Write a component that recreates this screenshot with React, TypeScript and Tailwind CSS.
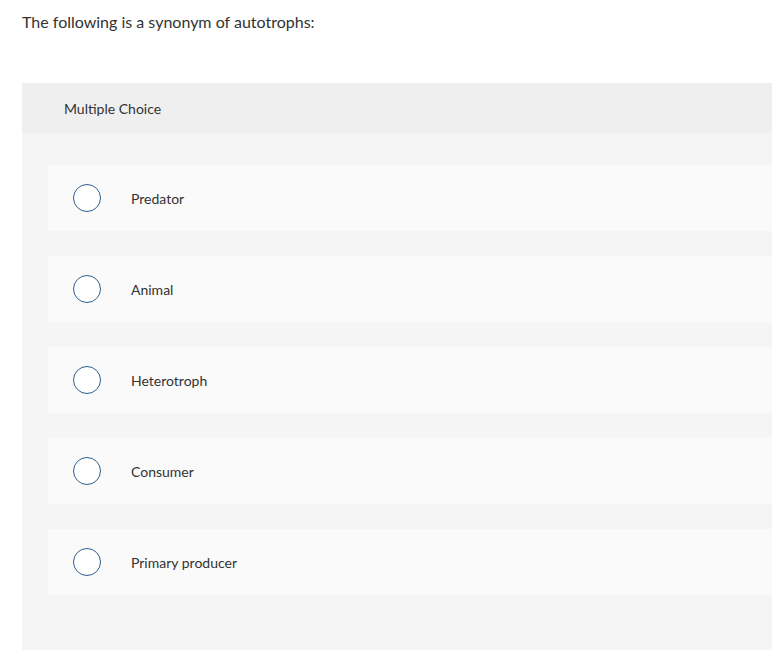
const options = ['Predator', 'Animal', 'Heterotroph', 'Consumer', 'Primary producer'];

export default function App() {
    return (
        <div className="min-h-[668px] bg-white pl-[22px] pt-[11px]" style={{ fontFamily: 'Lato, "Open Sans", sans-serif' }}>
            <p className="text-[16px] leading-[21px] text-[#333]">The following is a synonym of autotrophs:</p>

            <div className="mt-[51px] bg-[#f5f5f5] pb-[55px]">
                <div className="flex h-[50px] items-center bg-[#efefef] pl-[42px] text-[14px] text-[#333]">
                    Multiple Choice
                </div>

                <div className="flex flex-col gap-[25px] pl-[26px] pt-[32px]">
                    {options.map((label) => (
                        <label key={label} className="flex h-[66px] cursor-pointer items-center bg-[#fafafa] pl-[25px]">
                            <span className="h-[28px] w-[28px] shrink-0 rounded-full border-[1.5px] border-[#2f5f8f] bg-white" />
                            <span className="ml-[30px] text-[14px] text-[#333]">{label}</span>
                        </label>
                    ))}
                </div>
            </div>
        </div>
    );
}
